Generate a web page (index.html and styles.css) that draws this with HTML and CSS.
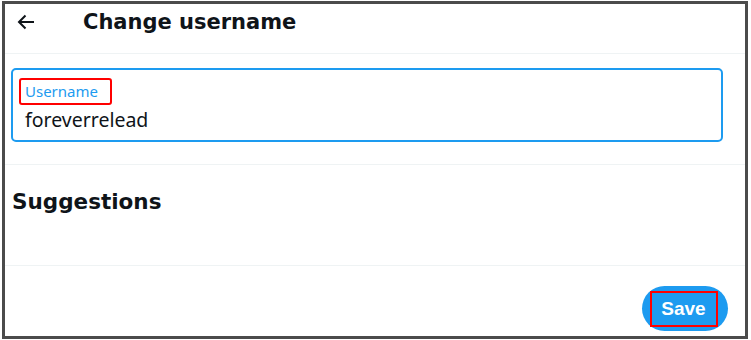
FILE: index.html
```html
<!DOCTYPE html>
<html lang="en">
<head>
    <meta charset="UTF-8">
    <meta name="viewport" content="width=device-width, initial-scale=1.0">
    <title>Change username</title>
    <link rel="stylesheet" href="styles.css">
</head>
<body>
    <div class="frame">
        <div class="header">
            <svg class="back" width="18" height="16" viewBox="0 0 18 16">
                <path d="M17 8H2M8.5 1.5L2 8l6.5 6.5" fill="none" stroke="#0f1419" stroke-width="2"/>
            </svg>
            <h2 class="title">Change username</h2>
        </div>
        <div class="field_wrap">
            <div class="field">
                <span class="label">Username</span>
                <div class="value">foreverrelead</div>
            </div>
        </div>
        <div class="suggestions">
            <h3>Suggestions</h3>
        </div>
        <div class="footer">
            <button class="save"><span>Save</span></button>
        </div>
    </div>
</body>
</html>
```

FILE: styles.css
```css
html, body{
    margin: 0;
    background: #fff;
}
body{
    padding: 1px 3px 1px 2px;
    font-family: "Noto Sans", "Liberation Sans", sans-serif;
    color: #0f1419;
}
.frame{
    height: 332px;
    border: 3px solid #4b4b4b;
    display: flex;
    flex-direction: column;
}
.header{
    height: 49px;
    display: flex;
    align-items: center;
    padding-left: 12px;
    border-bottom: 1px solid #eff3f4;
}
.header .back{
    margin-top: -14px;
}
.header .title{
    margin: -14px 0 0 48px;
    font-family: "DejaVu Sans", "Noto Sans", sans-serif;
    font-size: 21px;
    font-weight: 700;
}
.field_wrap{
    padding: 14px 22px 22px 6px;
    border-bottom: 1px solid #eff3f4;
}
.field{
    height: 70px;
    border: 2px solid #1d9bf0;
    border-radius: 5px;
    padding: 0 12px;
}
.field .label{
    display: inline-block;
    margin: 8px 0 0 -6px;
    padding: 2px 12px 2px 4px;
    border: 2px solid #ff0000;
    border-radius: 3px;
    color: #1d9bf0;
    font-size: 15px;
    line-height: 19px;
}
.field .value{
    margin-top: 2px;
    font-size: 19.5px;
    line-height: 26px;
}
.suggestions{
    height: 100px;
    padding-left: 7px;
    border-bottom: 1px solid #eff3f4;
}
.suggestions h3{
    margin: 24px 0 0;
    font-family: "DejaVu Sans", "Noto Sans", sans-serif;
    font-size: 21.5px;
    font-weight: 700;
}
.footer{
    flex: 1;
    display: flex;
    justify-content: flex-end;
    align-items: flex-start;
    padding: 20px 17px 0 0;
}
.save{
    width: 86px;
    height: 45px;
    border: none;
    border-radius: 23px;
    background: #1d9bf0;
    display: flex;
    align-items: center;
    justify-content: center;
    padding: 0 3px 0 0;
}
.save span{
    display: block;
    width: 64px;
    height: 32px;
    line-height: 32px;
    border: 2px solid #ff0000;
    color: #fff;
    font-family: "Liberation Sans", Arial, sans-serif;
    font-size: 19px;
    font-weight: 700;
}
```
